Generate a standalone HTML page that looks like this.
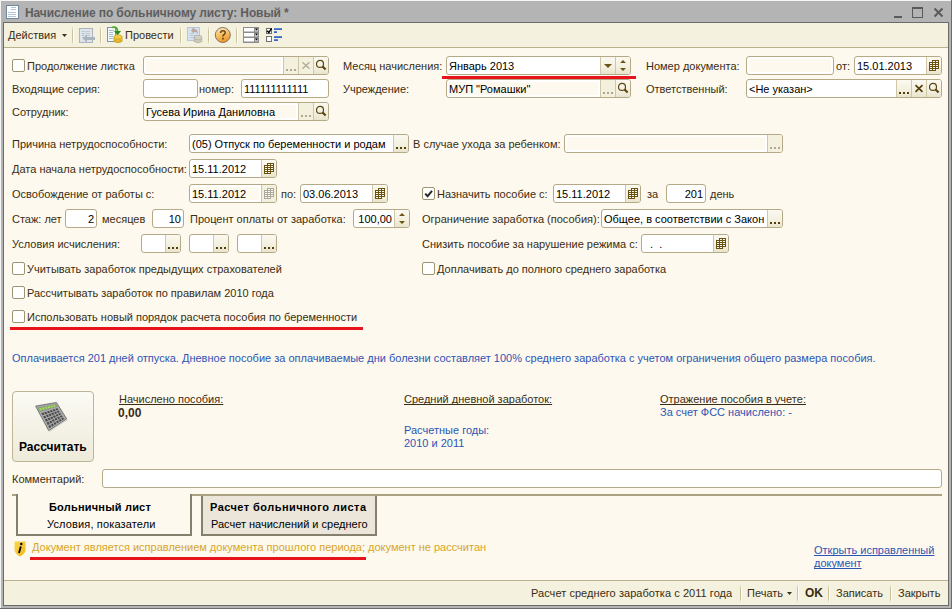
<!DOCTYPE html><html><head><meta charset="utf-8"><style>
html,body{margin:0;padding:0;}
body{width:952px;height:609px;position:relative;overflow:hidden;background:#b4b4b4;font-family:"Liberation Sans",sans-serif;font-size:11px;}
.a{position:absolute;}
.t{position:absolute;white-space:nowrap;line-height:13px;color:#3a2d12;}
.f{position:absolute;height:19px;box-sizing:border-box;border:1px solid #b4aa88;border-radius:3px;overflow:hidden;}
.ft{position:absolute;top:3px;line-height:13px;white-space:nowrap;color:#000000;}
.fb{position:absolute;top:0;width:15px;height:17px;box-sizing:border-box;border-left:1px solid #cfc7a8;background:linear-gradient(#fbf9f0 0%,#f3f0e0 60%,#e9e4cc 100%);}
.fb.fl{background:#f3f0de;}
.cb{position:absolute;width:13px;height:13px;box-sizing:border-box;border:1px solid #9d9472;border-radius:2px;background:#fff;}
.sep{position:absolute;width:2px;background:linear-gradient(90deg,#c9c09c 50%,#fffef8 50%);-webkit-mask-image:linear-gradient(transparent,#000 25%,#000 75%,transparent);}
.u{text-decoration:underline;text-decoration-skip-ink:none;}
</style></head><body>
<div class="a" style="left:0;top:0;width:952px;height:1px;background:#f4f4f4"></div>
<div class="a" style="left:0;top:0;width:1px;height:608px;background:#f4f4f4"></div>
<div class="a" style="left:951px;top:0;width:1px;height:609px;background:#6b6b6b"></div>
<div class="a" style="left:0;top:608px;width:952px;height:1px;background:#6b6b6b"></div>
<div class="a" style="left:3px;top:22px;width:946px;height:584px;box-sizing:border-box;border:1px solid #6b6b6b;background:#fdf9ee"></div>
<svg class="a" style="left:6px;top:5px" width="13" height="14"><rect x="0.5" y="0.5" width="12" height="13" fill="#fff" stroke="#6f8aa0"/><path d="M5 2.5H10M5 4.5H10M2 7.5H10M2 9.5H10M2 11.5H10" stroke="#b4c6d4" stroke-width="1"/></svg>
<div class="t" style="left:25px;top:7px;font-size:12px;font-weight:bold;color:#5e5e5e;letter-spacing:-0.1px">Начисление по больничному листу: Новый *</div>
<div class="a" style="left:894px;top:16px;width:8px;height:2px;background:#5a5a5a"></div>
<div class="a" style="left:912px;top:7px;width:11px;height:11px;box-sizing:border-box;border:1px solid #5a5a5a;border-top-width:2px"></div>
<svg class="a" style="left:933px;top:7px" width="11" height="11"><path d="M1.5 1.5L9.5 9.5M9.5 1.5L1.5 9.5" stroke="#5a5a5a" stroke-width="2"/></svg>
<div class="a" style="left:4px;top:23px;width:944px;height:24px;background:#f4f1df;border-bottom:1px solid #b9b08c"></div>
<div class="t" style="left:8px;top:29px;">Действия</div>
<svg class="a" style="left:62px;top:34px" width="6" height="3"><path d="M0 0H5L2.5 3Z" fill="#3a3020"/></svg>
<div class="sep" style="left:72px;top:26px;height:19px"></div>
<div class="sep" style="left:100px;top:26px;height:19px"></div>
<div class="sep" style="left:180px;top:26px;height:19px"></div>
<div class="sep" style="left:208px;top:26px;height:19px"></div>
<div class="sep" style="left:236px;top:26px;height:19px"></div>
<div class="t" style="left:125px;top:29px;">Провести</div>
<svg class="a" style="left:76px;top:25px" width="22" height="20">
<rect x="3.5" y="3.5" width="13" height="14" fill="#dfe4e8" stroke="#aab5be"/>
<path d="M6 6.5H8M6 8.5H8M6 10.5H8" stroke="#9ec0dc"/><path d="M9 6.5H14M9 8.5H14M9 10.5H14M6 12.5H10" stroke="#c0c8d0"/>
<path d="M19 12 H11 V9.5 L6.5 13.5 L11 17.5 V15 H19 Z" fill="#a9b4bd"/>
</svg>
<svg class="a" style="left:104px;top:25px" width="20" height="20">
<rect x="3.5" y="2.5" width="8" height="14" fill="#f4f7fa" stroke="#7f95aa"/>
<path d="M5 5.5H10M5 7.5H9M5 9.5H9M5 11.5H9M5 13.5H9" stroke="#a8bccd"/>
<path d="M8 2.5 Q13 1 13.5 6" fill="none" stroke="#4aa82a" stroke-width="1.8"/>
<path d="M10 6 H17 L13.5 10.5 Z" fill="#2f8a1c"/>
<ellipse cx="14" cy="11.5" rx="4" ry="1.6" fill="#f6d860" stroke="#c99a18" stroke-width="0.8"/>
<path d="M10 11.5 V16.5 Q14 19 18 16.5 V11.5" fill="#f0c83a" stroke="#c99a18" stroke-width="0.8"/>
<path d="M10.3 13.5 Q14 15.5 17.7 13.5 M10.3 15.3 Q14 17.3 17.7 15.3" fill="none" stroke="#c99a18" stroke-width="0.7"/>
</svg>
<svg class="a" style="left:185px;top:25px" width="20" height="20">
<rect x="2.5" y="2.5" width="12" height="13" fill="#d6e2ec" stroke="#b9c8d6"/>
<path d="M5 10.5H12M5 12.5H11M5 8.5H8" stroke="#b5cbe0"/>
<path d="M6 5.5 L9 2 V4 Q13 4 13 9 Q11.5 6.5 9 7 V9 Z" fill="#c0a6a0"/>
<ellipse cx="13" cy="12" rx="3.8" ry="1.6" fill="#d9d6c8" stroke="#b0ac9c" stroke-width="0.8"/>
<path d="M9.2 12 V16.5 Q13 19 16.8 16.5 V12" fill="#d2cebe" stroke="#b0ac9c" stroke-width="0.8"/>
<path d="M9.5 14 Q13 16 16.5 14" fill="none" stroke="#b0ac9c" stroke-width="0.7"/>
</svg>
<svg class="a" style="left:214px;top:26px" width="18" height="18">
<defs><linearGradient id="hg" x1="0" y1="0" x2="0.3" y2="1"><stop offset="0" stop-color="#fdf0cc"/><stop offset="0.5" stop-color="#f8c468"/><stop offset="1" stop-color="#ee9a2a"/></linearGradient></defs>
<circle cx="8.8" cy="9" r="7.5" fill="url(#hg)" stroke="#857565" stroke-width="1"/>
<path d="M6.6 7 Q6.6 4.8 8.9 4.8 Q11.2 4.8 11.2 6.8 Q11.2 8.1 9.8 8.7 Q8.9 9.1 8.9 10.6" fill="none" stroke="#6a4424" stroke-width="1.5"/>
<rect x="8.1" y="11.8" width="1.7" height="1.7" fill="#6a4424"/>
</svg>
<svg class="a" style="left:242px;top:26px" width="18" height="18">
<rect x="1" y="1" width="16" height="16" fill="#8c8c8c"/>
<rect x="2" y="2" width="10" height="3.5" fill="#fff"/><rect x="2" y="7" width="10" height="3.5" fill="#fff"/><rect x="2" y="12" width="10" height="3.5" fill="#fff"/>
<rect x="13" y="2" width="3" height="3.5" fill="#c8c8c8"/><rect x="13" y="7" width="3" height="3.5" fill="#c8c8c8"/><rect x="13" y="12" width="3" height="3.5" fill="#c8c8c8"/>
<path d="M13 2.6H16L14.5 4.6Z M13 7.6H16L14.5 9.6Z M13 12.6H16L14.5 14.6Z" fill="#000"/>
</svg>
<svg class="a" style="left:265px;top:27px" width="19" height="17">
<rect x="1.5" y="1.5" width="5" height="5" fill="#fff" stroke="#707070"/>
<path d="M2.2 3.8 L3.8 5.6 L6.6 1.4" fill="none" stroke="#000" stroke-width="1.5"/>
<rect x="1.5" y="9.5" width="5" height="5" fill="#fff" stroke="#707070"/>
<rect x="9" y="1.3" width="8" height="1.6" fill="#2456c8"/><rect x="9" y="4.3" width="3" height="1.6" fill="#2456c8"/>
<rect x="9" y="9.3" width="8" height="1.6" fill="#2456c8"/><rect x="9" y="12.3" width="4" height="1.6" fill="#2456c8"/>
</svg>
<div class="a" style="left:4px;top:580px;width:944px;height:25px;box-sizing:border-box;background:#f4f1df;border-top:1px solid #b9b08c"></div>
<div class="t" style="left:531px;top:587px;letter-spacing:0.05px">Расчет среднего заработка с 2011 года</div>
<div class="sep" style="left:740px;top:584px;height:19px"></div>
<div class="sep" style="left:797px;top:584px;height:19px"></div>
<div class="sep" style="left:828px;top:584px;height:19px"></div>
<div class="sep" style="left:890px;top:584px;height:19px"></div>
<div class="t" style="left:747px;top:587px;">Печать</div>
<svg class="a" style="left:787px;top:592px" width="6" height="3"><path d="M0 0H5L2.5 3Z" fill="#3a3020"/></svg>
<div class="t" style="left:805px;top:587px;font-weight:bold;font-size:12px">OK</div>
<div class="t" style="left:836px;top:587px;">Записать</div>
<div class="t" style="left:898px;top:587px;">Закрыть</div>
<div class="cb" style="left:12px;top:59px"></div>
<div class="t" style="left:27px;top:60px;">Продолжение листка</div>
<div class="f" style="left:143px;top:56px;width:186px;background:#fff"><div class="a" style="left:2px;top:2px;right:47px;bottom:2px;background:#fdf9ee"></div><div class="fb fl" style="left:139px"><svg width="14" height="17" style="position:absolute;left:0;top:0"><rect x="2" y="12" width="2" height="2" fill="#b0a894"/><rect x="6" y="12" width="2" height="2" fill="#b0a894"/><rect x="10" y="12" width="2" height="2" fill="#b0a894"/></svg></div><div class="fb fl" style="left:154px"><svg width="14" height="17" style="position:absolute;left:0;top:0"><path d="M3.5 5.2 L10.5 11.8 M10.5 5.2 L3.5 11.8" stroke="#b0a894" stroke-width="1.2"/></svg></div><div class="fb" style="left:169px"><svg width="14" height="17" style="position:absolute;left:0;top:0"><circle cx="6" cy="6.9" r="3.5" fill="none" stroke="#5a4612" stroke-width="1.2"/><path d="M8.6 9.5 L11.6 12.6" stroke="#5a4612" stroke-width="2.2"/></svg></div></div>
<div class="t" style="left:343px;top:60px;">Месяц начисления:</div>
<div class="f" style="left:446px;top:56px;width:185px;background:#fff"><div class="ft" style="left:2px">Январь 2013</div><div class="fb" style="left:153px"><svg width="14" height="17" style="position:absolute;left:0;top:0"><path d="M3 7 H11 L7 11 Z" fill="#6b5514"/></svg></div><div class="fb" style="left:168px"><svg width="14" height="17" style="position:absolute;left:0;top:0"><path d="M4 6 H10 L7 3 Z M4 11 H10 L7 14 Z" fill="#6b5514"/></svg></div></div>
<div class="a" style="left:442px;top:76px;width:194px;height:3px;background:#e8141c"></div>
<div class="t" style="left:646px;top:60px;">Номер документа:</div>
<div class="f" style="left:746px;top:56px;width:88px;background:#fff"><div class="a" style="left:2px;top:2px;right:2px;bottom:2px;background:#fdf9ee"></div></div>
<div class="t" style="left:836px;top:60px;">от:</div>
<div class="f" style="left:854px;top:56px;width:88px;background:#fff"><div class="ft" style="left:2px">15.01.2013</div><div class="fb" style="left:71px"><svg width="14" height="17" style="position:absolute;left:0;top:0"><path d="M5 3H12V12H9V14H2V5H5Z" fill="#6b5010"/><rect x="6" y="4" width="2" height="1" fill="#fffdf4"/><rect x="9" y="4" width="2" height="1" fill="#fffdf4"/><rect x="3" y="6" width="2" height="1" fill="#fffdf4"/><rect x="6" y="6" width="2" height="1" fill="#fffdf4"/><rect x="9" y="6" width="2" height="1" fill="#fffdf4"/><rect x="3" y="8" width="2" height="1" fill="#fffdf4"/><rect x="6" y="8" width="2" height="1" fill="#fffdf4"/><rect x="9" y="8" width="2" height="1" fill="#fffdf4"/><rect x="3" y="10" width="2" height="1" fill="#fffdf4"/><rect x="6" y="10" width="2" height="1" fill="#fffdf4"/><rect x="9" y="10" width="2" height="1" fill="#fffdf4"/><rect x="3" y="12" width="2" height="1" fill="#fffdf4"/><rect x="6" y="12" width="2" height="1" fill="#fffdf4"/></svg></div></div>
<div class="t" style="left:12px;top:83px;">Входящие серия:</div>
<div class="f" style="left:143px;top:79px;width:55px;background:#fff"></div>
<div class="t" style="left:199px;top:83px;">номер:</div>
<div class="f" style="left:241px;top:79px;width:88px;background:#fff"><div class="ft" style="left:2px">111111111111</div></div>
<div class="t" style="left:343px;top:83px;">Учреждение:</div>
<div class="f" style="left:446px;top:79px;width:185px;background:#fff"><div class="a" style="left:2px;top:2px;right:32px;bottom:2px;background:#fdf9ee"></div><div class="ft" style="left:2px">МУП "Ромашки"</div><div class="fb fl" style="left:153px"><svg width="14" height="17" style="position:absolute;left:0;top:0"><rect x="2" y="12" width="2" height="2" fill="#b0a894"/><rect x="6" y="12" width="2" height="2" fill="#b0a894"/><rect x="10" y="12" width="2" height="2" fill="#b0a894"/></svg></div><div class="fb" style="left:168px"><svg width="14" height="17" style="position:absolute;left:0;top:0"><circle cx="6" cy="6.9" r="3.5" fill="none" stroke="#5a4612" stroke-width="1.2"/><path d="M8.6 9.5 L11.6 12.6" stroke="#5a4612" stroke-width="2.2"/></svg></div></div>
<div class="t" style="left:646px;top:83px;">Ответственный:</div>
<div class="f" style="left:746px;top:79px;width:196px;background:#fff"><div class="ft" style="left:2px">&lt;Не указан&gt;</div><div class="fb" style="left:149px"><svg width="14" height="17" style="position:absolute;left:0;top:0"><rect x="2" y="12" width="2" height="2" fill="#553f08"/><rect x="6" y="12" width="2" height="2" fill="#553f08"/><rect x="10" y="12" width="2" height="2" fill="#553f08"/></svg></div><div class="fb" style="left:164px"><svg width="14" height="17" style="position:absolute;left:0;top:0"><path d="M3.5 5.2 L10.5 11.8 M10.5 5.2 L3.5 11.8" stroke="#553f08" stroke-width="1.7"/></svg></div><div class="fb" style="left:179px"><svg width="14" height="17" style="position:absolute;left:0;top:0"><circle cx="6" cy="6.9" r="3.5" fill="none" stroke="#5a4612" stroke-width="1.2"/><path d="M8.6 9.5 L11.6 12.6" stroke="#5a4612" stroke-width="2.2"/></svg></div></div>
<div class="t" style="left:12px;top:106px;">Сотрудник:</div>
<div class="f" style="left:143px;top:102px;width:186px;background:#fff"><div class="a" style="left:2px;top:2px;right:32px;bottom:2px;background:#fdf9ee"></div><div class="ft" style="left:2px">Гусева Ирина Даниловна</div><div class="fb fl" style="left:154px"><svg width="14" height="17" style="position:absolute;left:0;top:0"><rect x="2" y="12" width="2" height="2" fill="#b0a894"/><rect x="6" y="12" width="2" height="2" fill="#b0a894"/><rect x="10" y="12" width="2" height="2" fill="#b0a894"/></svg></div><div class="fb" style="left:169px"><svg width="14" height="17" style="position:absolute;left:0;top:0"><circle cx="6" cy="6.9" r="3.5" fill="none" stroke="#5a4612" stroke-width="1.2"/><path d="M8.6 9.5 L11.6 12.6" stroke="#5a4612" stroke-width="2.2"/></svg></div></div>
<div class="t" style="left:12px;top:138px;">Причина нетрудоспособности:</div>
<div class="f" style="left:189px;top:134px;width:220px;background:#fff"><div class="ft" style="left:2px">(05) Отпуск по беременности и родам</div><div class="fb" style="left:203px"><svg width="14" height="17" style="position:absolute;left:0;top:0"><rect x="2" y="12" width="2" height="2" fill="#553f08"/><rect x="6" y="12" width="2" height="2" fill="#553f08"/><rect x="10" y="12" width="2" height="2" fill="#553f08"/></svg></div></div>
<div class="t" style="left:413px;top:138px;">В случае ухода за ребенком:</div>
<div class="f" style="left:564px;top:134px;width:219px;background:#fff"><div class="a" style="left:2px;top:2px;right:17px;bottom:2px;background:#fdf9ee"></div><div class="fb fl" style="left:202px"><svg width="14" height="17" style="position:absolute;left:0;top:0"><rect x="2" y="12" width="2" height="2" fill="#b0a894"/><rect x="6" y="12" width="2" height="2" fill="#b0a894"/><rect x="10" y="12" width="2" height="2" fill="#b0a894"/></svg></div></div>
<div class="t" style="left:12px;top:163px;">Дата начала нетрудоспособности:</div>
<div class="f" style="left:189px;top:159px;width:88px;background:#fff"><div class="ft" style="left:2px">15.11.2012</div><div class="fb" style="left:71px"><svg width="14" height="17" style="position:absolute;left:0;top:0"><path d="M5 3H12V12H9V14H2V5H5Z" fill="#6b5010"/><rect x="6" y="4" width="2" height="1" fill="#fffdf4"/><rect x="9" y="4" width="2" height="1" fill="#fffdf4"/><rect x="3" y="6" width="2" height="1" fill="#fffdf4"/><rect x="6" y="6" width="2" height="1" fill="#fffdf4"/><rect x="9" y="6" width="2" height="1" fill="#fffdf4"/><rect x="3" y="8" width="2" height="1" fill="#fffdf4"/><rect x="6" y="8" width="2" height="1" fill="#fffdf4"/><rect x="9" y="8" width="2" height="1" fill="#fffdf4"/><rect x="3" y="10" width="2" height="1" fill="#fffdf4"/><rect x="6" y="10" width="2" height="1" fill="#fffdf4"/><rect x="9" y="10" width="2" height="1" fill="#fffdf4"/><rect x="3" y="12" width="2" height="1" fill="#fffdf4"/><rect x="6" y="12" width="2" height="1" fill="#fffdf4"/></svg></div></div>
<div class="t" style="left:12px;top:188px;">Освобождение от работы с:</div>
<div class="f" style="left:189px;top:184px;width:88px;background:#fff"><div class="a" style="left:2px;top:2px;right:17px;bottom:2px;background:#fdf9ee"></div><div class="ft" style="left:2px">15.11.2012</div><div class="fb fl" style="left:71px"><svg width="14" height="17" style="position:absolute;left:0;top:0"><path d="M5 3H12V12H9V14H2V5H5Z" fill="#aca89c"/><rect x="6" y="4" width="2" height="1" fill="#fffdf4"/><rect x="9" y="4" width="2" height="1" fill="#fffdf4"/><rect x="3" y="6" width="2" height="1" fill="#fffdf4"/><rect x="6" y="6" width="2" height="1" fill="#fffdf4"/><rect x="9" y="6" width="2" height="1" fill="#fffdf4"/><rect x="3" y="8" width="2" height="1" fill="#fffdf4"/><rect x="6" y="8" width="2" height="1" fill="#fffdf4"/><rect x="9" y="8" width="2" height="1" fill="#fffdf4"/><rect x="3" y="10" width="2" height="1" fill="#fffdf4"/><rect x="6" y="10" width="2" height="1" fill="#fffdf4"/><rect x="9" y="10" width="2" height="1" fill="#fffdf4"/><rect x="3" y="12" width="2" height="1" fill="#fffdf4"/><rect x="6" y="12" width="2" height="1" fill="#fffdf4"/></svg></div></div>
<div class="t" style="left:281px;top:188px;">по:</div>
<div class="f" style="left:300px;top:184px;width:88px;background:#fff"><div class="ft" style="left:2px">03.06.2013</div><div class="fb" style="left:71px"><svg width="14" height="17" style="position:absolute;left:0;top:0"><path d="M5 3H12V12H9V14H2V5H5Z" fill="#6b5010"/><rect x="6" y="4" width="2" height="1" fill="#fffdf4"/><rect x="9" y="4" width="2" height="1" fill="#fffdf4"/><rect x="3" y="6" width="2" height="1" fill="#fffdf4"/><rect x="6" y="6" width="2" height="1" fill="#fffdf4"/><rect x="9" y="6" width="2" height="1" fill="#fffdf4"/><rect x="3" y="8" width="2" height="1" fill="#fffdf4"/><rect x="6" y="8" width="2" height="1" fill="#fffdf4"/><rect x="9" y="8" width="2" height="1" fill="#fffdf4"/><rect x="3" y="10" width="2" height="1" fill="#fffdf4"/><rect x="6" y="10" width="2" height="1" fill="#fffdf4"/><rect x="9" y="10" width="2" height="1" fill="#fffdf4"/><rect x="3" y="12" width="2" height="1" fill="#fffdf4"/><rect x="6" y="12" width="2" height="1" fill="#fffdf4"/></svg></div></div>
<div class="cb" style="left:422px;top:187px"><svg width="13" height="13" style="position:absolute;left:-1px;top:-1px"><path d="M3.2 6.6 L5.6 9.2 L10 3.8" fill="none" stroke="#2a2a2a" stroke-width="2"/></svg></div>
<div class="t" style="left:437px;top:188px;">Назначить пособие с:</div>
<div class="f" style="left:553px;top:184px;width:88px;background:#fff"><div class="ft" style="left:2px">15.11.2012</div><div class="fb" style="left:71px"><svg width="14" height="17" style="position:absolute;left:0;top:0"><path d="M5 3H12V12H9V14H2V5H5Z" fill="#6b5010"/><rect x="6" y="4" width="2" height="1" fill="#fffdf4"/><rect x="9" y="4" width="2" height="1" fill="#fffdf4"/><rect x="3" y="6" width="2" height="1" fill="#fffdf4"/><rect x="6" y="6" width="2" height="1" fill="#fffdf4"/><rect x="9" y="6" width="2" height="1" fill="#fffdf4"/><rect x="3" y="8" width="2" height="1" fill="#fffdf4"/><rect x="6" y="8" width="2" height="1" fill="#fffdf4"/><rect x="9" y="8" width="2" height="1" fill="#fffdf4"/><rect x="3" y="10" width="2" height="1" fill="#fffdf4"/><rect x="6" y="10" width="2" height="1" fill="#fffdf4"/><rect x="9" y="10" width="2" height="1" fill="#fffdf4"/><rect x="3" y="12" width="2" height="1" fill="#fffdf4"/><rect x="6" y="12" width="2" height="1" fill="#fffdf4"/></svg></div></div>
<div class="t" style="left:647px;top:188px;">за</div>
<div class="f" style="left:666px;top:184px;width:40px;background:#fff"><div class="ft" style="right:2px;text-align:right">201</div></div>
<div class="t" style="left:710px;top:188px;">день</div>
<div class="t" style="left:12px;top:213px;">Стаж: лет</div>
<div class="f" style="left:65px;top:209px;width:32px;background:#fff"><div class="ft" style="right:2px;text-align:right">2</div></div>
<div class="t" style="left:102px;top:213px;">месяцев</div>
<div class="f" style="left:152px;top:209px;width:32px;background:#fff"><div class="ft" style="right:2px;text-align:right">10</div></div>
<div class="t" style="left:190px;top:213px;">Процент оплаты от заработка:</div>
<div class="f" style="left:353px;top:209px;width:57px;background:#fff"><div class="ft" style="right:17px;text-align:right">100,00</div><div class="fb" style="left:40px"><svg width="14" height="17" style="position:absolute;left:0;top:0"><path d="M4 6 H10 L7 3 Z M4 11 H10 L7 14 Z" fill="#6b5514"/></svg></div></div>
<div class="t" style="left:422px;top:213px;">Ограничение заработка (пособия):</div>
<div class="f" style="left:601px;top:209px;width:182px;background:#fff"><div class="ft" style="left:2px">Общее, в соответствии с Закон</div><div class="fb" style="left:165px"><svg width="14" height="17" style="position:absolute;left:0;top:0"><rect x="2" y="12" width="2" height="2" fill="#553f08"/><rect x="6" y="12" width="2" height="2" fill="#553f08"/><rect x="10" y="12" width="2" height="2" fill="#553f08"/></svg></div></div>
<div class="t" style="left:12px;top:238px;">Условия исчисления:</div>
<div class="f" style="left:141px;top:234px;width:40px;background:#fff"><div class="fb" style="left:23px"><svg width="14" height="17" style="position:absolute;left:0;top:0"><rect x="2" y="12" width="2" height="2" fill="#553f08"/><rect x="6" y="12" width="2" height="2" fill="#553f08"/><rect x="10" y="12" width="2" height="2" fill="#553f08"/></svg></div></div>
<div class="f" style="left:189px;top:234px;width:40px;background:#fff"><div class="fb" style="left:23px"><svg width="14" height="17" style="position:absolute;left:0;top:0"><rect x="2" y="12" width="2" height="2" fill="#553f08"/><rect x="6" y="12" width="2" height="2" fill="#553f08"/><rect x="10" y="12" width="2" height="2" fill="#553f08"/></svg></div></div>
<div class="f" style="left:237px;top:234px;width:40px;background:#fff"><div class="fb" style="left:23px"><svg width="14" height="17" style="position:absolute;left:0;top:0"><rect x="2" y="12" width="2" height="2" fill="#553f08"/><rect x="6" y="12" width="2" height="2" fill="#553f08"/><rect x="10" y="12" width="2" height="2" fill="#553f08"/></svg></div></div>
<div class="t" style="left:422px;top:238px;">Снизить пособие за нарушение режима с:</div>
<div class="f" style="left:641px;top:234px;width:88px;background:#fff"><div class="ft" style="left:2px">&nbsp;&nbsp;.&nbsp;&nbsp;.</div><div class="fb" style="left:71px"><svg width="14" height="17" style="position:absolute;left:0;top:0"><path d="M5 3H12V12H9V14H2V5H5Z" fill="#6b5010"/><rect x="6" y="4" width="2" height="1" fill="#fffdf4"/><rect x="9" y="4" width="2" height="1" fill="#fffdf4"/><rect x="3" y="6" width="2" height="1" fill="#fffdf4"/><rect x="6" y="6" width="2" height="1" fill="#fffdf4"/><rect x="9" y="6" width="2" height="1" fill="#fffdf4"/><rect x="3" y="8" width="2" height="1" fill="#fffdf4"/><rect x="6" y="8" width="2" height="1" fill="#fffdf4"/><rect x="9" y="8" width="2" height="1" fill="#fffdf4"/><rect x="3" y="10" width="2" height="1" fill="#fffdf4"/><rect x="6" y="10" width="2" height="1" fill="#fffdf4"/><rect x="9" y="10" width="2" height="1" fill="#fffdf4"/><rect x="3" y="12" width="2" height="1" fill="#fffdf4"/><rect x="6" y="12" width="2" height="1" fill="#fffdf4"/></svg></div></div>
<div class="cb" style="left:12px;top:262px"></div>
<div class="t" style="left:27px;top:263px;">Учитывать заработок предыдущих страхователей</div>
<div class="cb" style="left:422px;top:262px"></div>
<div class="t" style="left:437px;top:263px;">Доплачивать до полного среднего заработка</div>
<div class="cb" style="left:12px;top:286px"></div>
<div class="t" style="left:27px;top:287px;">Рассчитывать заработок по правилам 2010 года</div>
<div class="cb" style="left:12px;top:310px"></div>
<div class="t" style="left:27px;top:311px;">Использовать новый порядок расчета пособия по беременности</div>
<div class="a" style="left:10px;top:327px;width:353px;height:3px;background:#e8141c"></div>
<div class="t" style="left:12px;top:352px;color:#2d55b4">Оплачивается 201 дней отпуска. Дневное пособие за оплачиваемые дни болезни составляет 100% среднего заработка с учетом ограничения общего размера пособия.</div>
<div class="a" style="left:12px;top:391px;width:82px;height:71px;box-sizing:border-box;border:1px solid #bdb595;border-radius:4px;background:linear-gradient(#fbfaf4,#eeebda)"></div>
<svg class="a" style="left:30px;top:398px" width="42" height="38"><path d="M5.60 8.10 L26.40 4.50 L36.60 20.80 L18.70 32.60 Z" fill="#000" opacity="0.12" transform="translate(1.2,1.2)"/><path d="M5.60 8.10 L26.40 4.50 L36.60 20.80 L18.70 32.60 Z" fill="#a9a9a9" stroke="#6f6f6f" stroke-width="0.9"/><path d="M7.75 9.56 L25.88 5.89 L27.64 8.75 L9.95 13.65 Z" fill="#8c9a80" /><path d="M9.09 10.34 L10.93 9.94 L12.06 12.00 L10.24 12.48 Z" fill="#9be84a" /><path d="M11.85 9.74 L13.70 9.33 L14.79 11.30 L12.97 11.77 Z" fill="#9be84a" /><path d="M14.62 9.13 L16.46 8.72 L17.52 10.59 L15.70 11.06 Z" fill="#9be84a" /><path d="M17.38 8.52 L19.23 8.12 L20.25 9.88 L18.43 10.35 Z" fill="#9be84a" /><path d="M20.15 7.91 L21.99 7.51 L22.98 9.17 L21.16 9.65 Z" fill="#9be84a" /><path d="M22.91 7.31 L24.76 6.90 L25.71 8.47 L23.89 8.94 Z" fill="#9be84a" /><path d="M11.45 15.14 L13.44 14.53 L14.57 16.59 L12.61 17.28 Z" fill="#4a4a4a" /><path d="M14.24 14.28 L16.23 13.67 L17.32 15.63 L15.36 16.32 Z" fill="#4a4a4a" /><path d="M17.02 13.42 L19.01 12.81 L20.07 14.67 L18.11 15.35 Z" fill="#4a4a4a" /><path d="M19.81 12.56 L21.80 11.95 L22.82 13.70 L20.86 14.39 Z" fill="#4a4a4a" /><path d="M22.60 11.70 L24.59 11.09 L25.57 12.74 L23.61 13.43 Z" fill="#4a4a4a" /><path d="M25.38 10.84 L27.37 10.23 L28.32 11.78 L26.36 12.46 Z" fill="#4a4a4a" /><path d="M13.19 18.35 L15.14 17.63 L16.27 19.69 L14.34 20.49 Z" fill="#4a4a4a" /><path d="M15.92 17.34 L17.87 16.61 L18.96 18.57 L17.04 19.37 Z" fill="#4a4a4a" /><path d="M18.65 16.32 L20.60 15.60 L21.66 17.45 L19.73 18.25 Z" fill="#4a4a4a" /><path d="M21.38 15.31 L23.33 14.58 L24.35 16.34 L22.43 17.13 Z" fill="#4a4a4a" /><path d="M24.11 14.29 L26.06 13.57 L27.04 15.22 L25.12 16.02 Z" fill="#4a4a4a" /><path d="M26.84 13.28 L28.79 12.55 L29.74 14.10 L27.81 14.90 Z" fill="#4a4a4a" /><path d="M14.92 21.56 L16.83 20.72 L17.96 22.79 L16.07 23.70 Z" fill="#4a4a4a" /><path d="M17.60 20.39 L19.51 19.55 L20.60 21.51 L18.71 22.42 Z" fill="#4a4a4a" /><path d="M20.27 19.22 L22.18 18.38 L23.24 20.24 L21.35 21.15 Z" fill="#4a4a4a" /><path d="M22.95 18.05 L24.86 17.21 L25.88 18.97 L23.99 19.88 Z" fill="#4a4a4a" /><path d="M25.62 16.88 L27.54 16.04 L28.52 17.69 L26.63 18.60 Z" fill="#4a4a4a" /><path d="M28.30 15.71 L30.21 14.87 L31.16 16.42 L29.27 17.33 Z" fill="#4a4a4a" /><path d="M16.65 24.77 L18.52 23.82 L19.65 25.88 L17.81 26.90 Z" fill="#4a4a4a" /><path d="M19.27 23.44 L21.15 22.49 L22.24 24.46 L20.39 25.48 Z" fill="#4a4a4a" /><path d="M21.90 22.12 L23.77 21.17 L24.82 23.03 L22.98 24.05 Z" fill="#4a4a4a" /><path d="M24.52 20.79 L26.39 19.85 L27.41 21.60 L25.56 22.62 Z" fill="#4a4a4a" /><path d="M27.14 19.47 L29.01 18.52 L29.99 20.17 L28.15 21.19 Z" fill="#4a4a4a" /><path d="M29.76 18.14 L31.63 17.20 L32.58 18.74 L30.73 19.76 Z" fill="#4a4a4a" /><path d="M18.39 27.97 L20.22 26.92 L21.35 28.98 L19.54 30.11 Z" fill="#4a4a4a" /><path d="M20.95 26.49 L22.79 25.44 L23.88 27.40 L22.07 28.53 Z" fill="#4a4a4a" /><path d="M23.52 25.01 L25.35 23.96 L26.41 25.82 L24.60 26.95 Z" fill="#4a4a4a" /><path d="M26.09 23.53 L27.92 22.48 L28.94 24.23 L27.13 25.36 Z" fill="#4a4a4a" /><path d="M28.65 22.05 L30.49 21.00 L31.47 22.65 L29.66 23.78 Z" fill="#4a4a4a" /><path d="M31.22 20.57 L33.05 19.52 L34.00 21.07 L32.19 22.20 Z" fill="#4a4a4a" /></svg>
<div class="t" style="left:19px;top:441px;font-weight:bold;font-size:12px;color:#000">Рассчитать</div>
<div class="t u" style="left:119px;top:393px;">Начислено пособия:</div>
<div class="t" style="left:118px;top:407px;font-weight:bold;font-size:12px">0,00</div>
<div class="t u" style="left:404px;top:393px;">Средний дневной заработок:</div>
<div class="t" style="left:404px;top:424px;color:#2d55b4">Расчетные годы:</div>
<div class="t" style="left:404px;top:437px;color:#2d55b4">2010 и 2011</div>
<div class="t u" style="left:660px;top:393px;">Отражение пособия в учете:</div>
<div class="t" style="left:660px;top:406px;color:#2d55b4">За счет ФСС начислено: -</div>
<div class="t" style="left:12px;top:473px;">Комментарий:</div>
<div class="f" style="left:102px;top:469px;width:840px;background:#fff"></div>
<div class="a" style="left:12px;top:494px;width:4px;height:2px;background:#aaa283"></div>
<div class="a" style="left:192px;top:494px;width:750px;height:2px;background:#aaa283"></div>
<div class="a" style="left:16px;top:494px;width:176px;height:42px;box-sizing:border-box;border:2px solid #857f6e;border-top:none"></div>
<div class="a" style="left:201px;top:496px;width:176px;height:40px;box-sizing:border-box;border:2px solid #857f6e;border-top:none;background:#ebe6d9"></div>
<div class="t" style="left:49px;top:501px;font-weight:bold;color:#000;letter-spacing:0.2px">Больничный лист</div>
<div class="t" style="left:47px;top:518px;color:#000;letter-spacing:0.15px">Условия, показатели</div>
<div class="t" style="left:210px;top:501px;font-weight:bold;color:#000;letter-spacing:0.45px">Расчет больничного листа</div>
<div class="t" style="left:211px;top:518px;color:#000">Расчет начислений и среднего</div>
<svg class="a" style="left:14px;top:541px" width="12" height="16"><defs><linearGradient id="sg" x1="0" y1="0" x2="1" y2="1"><stop offset="0" stop-color="#fbd650"/><stop offset="1" stop-color="#f2b818"/></linearGradient></defs><path d="M0.5 0.5H11.5V8.5Q11.5 12.5 6 15.5Q0.5 12.5 0.5 8.5Z" fill="url(#sg)"/><circle cx="7.3" cy="3" r="1.2" fill="#000"/><path d="M6.8 5.5L5 12" stroke="#000" stroke-width="1.8"/></svg>
<div class="t" style="left:32px;top:541px;color:#d8a626">Документ является исправлением документа прошлого периода; документ не рассчитан</div>
<div class="a" style="left:30px;top:557px;width:336px;height:3px;background:#e8141c"></div>
<div class="t u" style="left:814px;top:544px;color:#2d55b4">Открыть исправленный</div>
<div class="t u" style="left:814px;top:557px;color:#2d55b4">документ</div>
</body></html>
